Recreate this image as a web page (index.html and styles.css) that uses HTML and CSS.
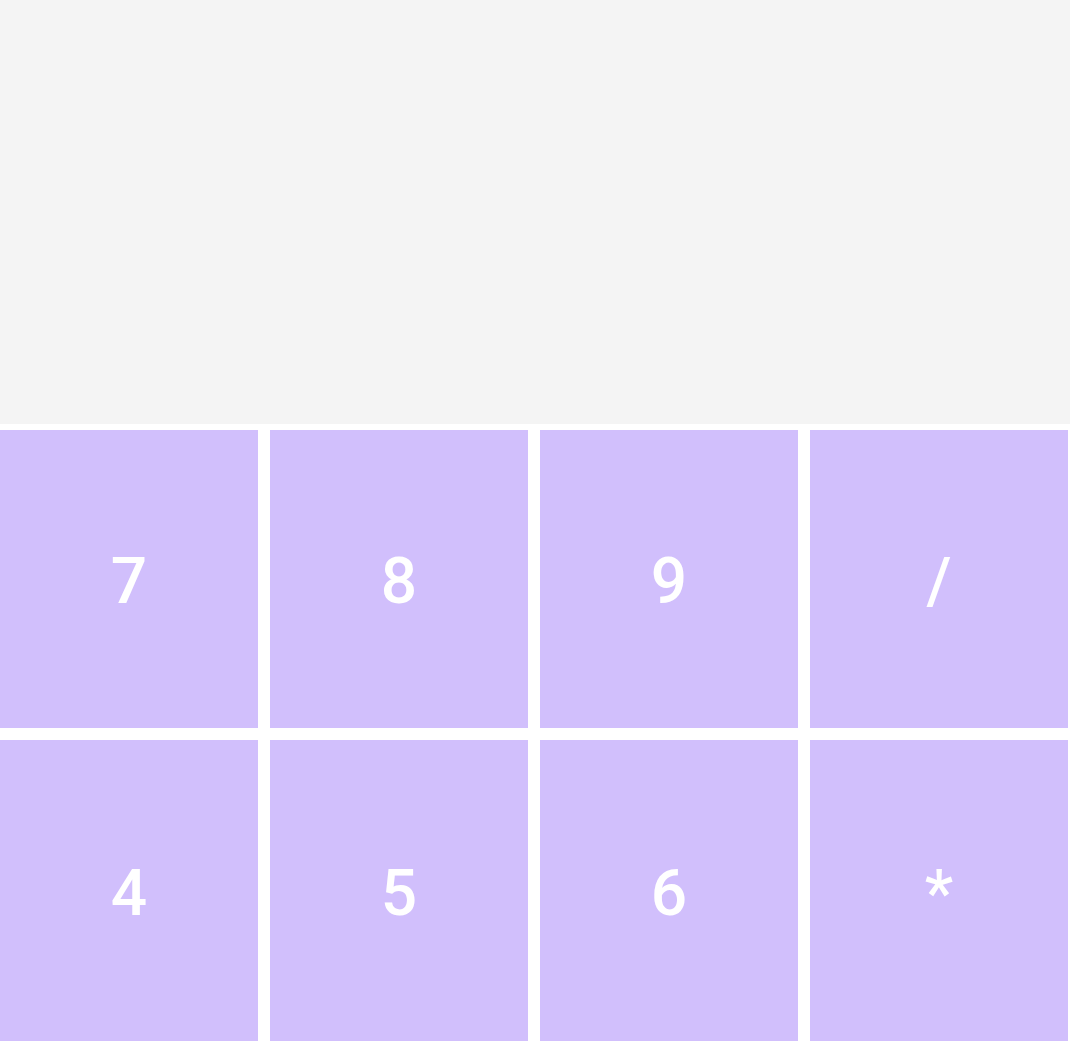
FILE: index.html
```html
<!DOCTYPE html>
<html>
<head>
<meta charset="utf-8">
<link rel="stylesheet" href="styles.css">
</head>
<body>
<div class="calc">
  <div class="display"></div>
  <div class="keys">
    <button class="key">7</button>
    <button class="key">8</button>
    <button class="key">9</button>
    <button class="key">/</button>
    <button class="key">4</button>
    <button class="key">5</button>
    <button class="key">6</button>
    <button class="key">*</button>
  </div>
</div>
</body>
</html>
```
FILE: styles.css
```css
html, body {
  margin: 0;
  padding: 0;
  background: #ffffff;
  overflow: hidden;
}
.calc {
  width: 1068px;
  display: flex;
  flex-direction: column;
  gap: 6px;
}
.display {
  height: 424px;
  width: 1070px;
  background: #f4f4f4;
}
.keys {
  display: grid;
  grid-template-columns: repeat(4, 258px);
  grid-template-rows: 298px 302px;
  gap: 12px;
}
.key {
  border: none;
  margin: 0;
  padding: 0;
  background: #d1bffc;
  color: #ffffff;
  font-family: Roboto, "Noto Sans", sans-serif;
  font-size: 64px;
  font-weight: 500;
  display: flex;
  align-items: center;
  justify-content: center;
  padding-top: 4px;
}
```
